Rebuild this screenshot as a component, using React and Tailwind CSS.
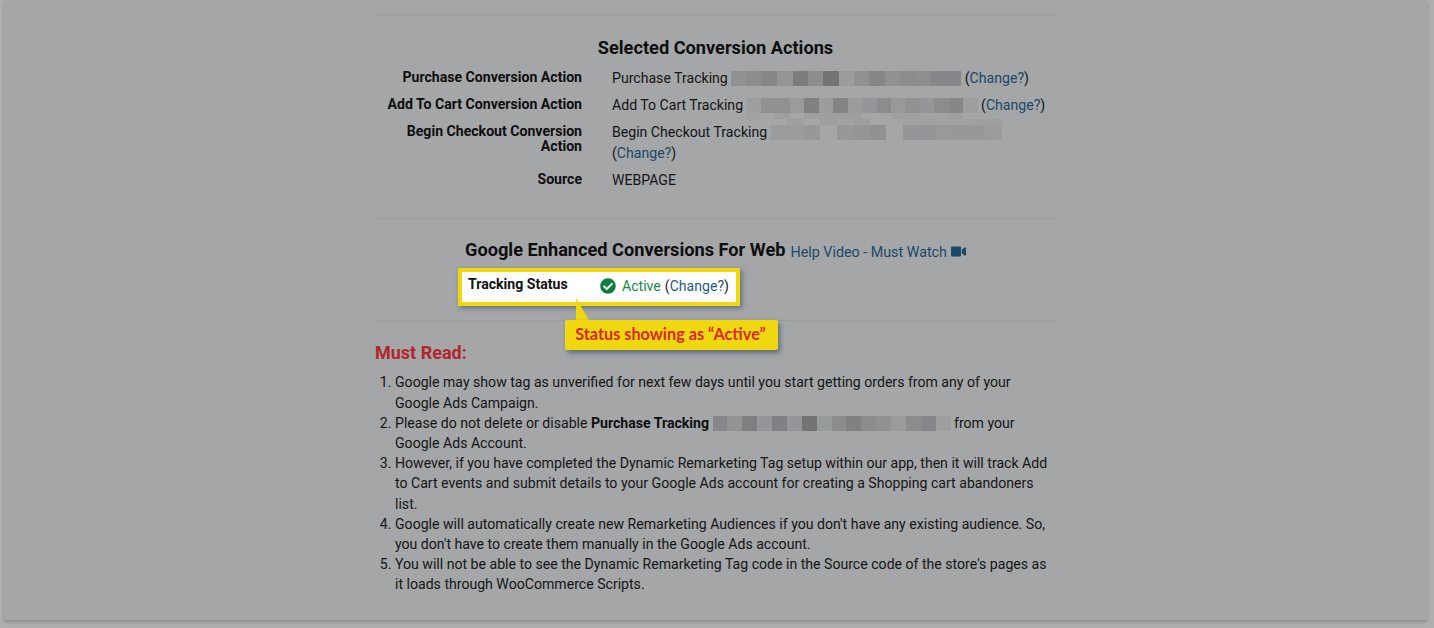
import { FaCheckCircle, FaVideo } from 'react-icons/fa';

const purchaseCells = ['#8f9193', '#8a8c8e', '#85878a', '#939597', '#7a7c7e', '#8b8d8f', '#727476', '#9a9c9e', '#8f9193', '#84868a', '#8f9193', '#8a8c8e', '#8c8e90', '#85878a', '#85878a'];
const addCells = ['#9c9ea0', '#8f9193', '#8f9193', '#999b9d', '#7f8183', '#9a9c9e', '#828486', '#9a9c9e', '#94969a', '#8a8c8e', '#97999b', '#8f9193', '#94969a', '#8a8c8e', '#85878a', '#9c9ea0'];
const addFringe = ['#a0a2a4', '#a4a6a8', '#9c9ea0', '#a4a6a8', '#9f9fa2', '#9f9fa2', '#9f9fa2', '#9c9ea0', '#a4a6a8', '#a4a6a8', '#9f9fa2', '#9f9fa2', '#a0a2a4', '#a0a2a4', '#9f9fa2', '#a4a6a8'];
const checkoutCells = ['#9a9c9e', '#9a9c9e', '#96989a', '#a4a6a8', '#969899', '#939597', '#8f9193', '#a4a6a8', '#94969a', '#94969a', '#979a9b', '#96989a', '#96989a', '#9a9c9e'];
const checkoutFringe = ['#a4a6a8', '#9f9fa2', '#a4a6a8', '#9f9fa2', '#a0a2a4', '#9c9ea0', '#a4a6a8', '#a4a6a8', '#a0a2a4', '#9f9fa2', '#a0a2a4', '#a0a2a4', '#9f9fa2', '#9f9fa2'];
const noteCells = ['#85878a', '#919395', '#7d7f81', '#94969a', '#7f8183', '#94969a', '#727476', '#979a9b', '#8a8c8e', '#7f8183', '#8a8c8e', '#8f9193', '#999b9d', '#8a8c8e', '#85878a', '#9c9ea0'];

function Cells({ cells, className }) {
  return (
    <span className={`flex ${className}`}>
      {cells.map((c, i) => (
        <span key={i} className="h-full flex-1" style={{ backgroundColor: c }} />
      ))}
    </span>
  );
}

function Blur({ cells, width, fringe, fringeClass }) {
  return (
    <span className={`relative inline-block h-[15px] align-[-3px] ${width}`}>
      <Cells cells={cells} className="h-full w-full" />
      {fringe && <Cells cells={fringe} className={`absolute left-0 w-full ${fringeClass}`} />}
    </span>
  );
}

function Change() {
  return (
    <>
      (<a className="text-[#1a4868]">Change?</a>)
    </>
  );
}

function Row({ label, children, className }) {
  return (
    <div className={`flex ${className}`}>
      <div className="w-[207px] shrink-0 pt-[2px] text-right font-bold leading-[15px] text-[#0e0e0e]">{label}</div>
      <div className="ml-[30px] w-[444px] leading-[21px] text-[#151515]">{children}</div>
    </div>
  );
}

export default function App() {
  return (
    <div className="h-[628px] overflow-hidden bg-[#adafb1] font-['Roboto',sans-serif] text-[14.1px] text-[#151515]">
      <div className="ml-[4px] h-[620px] w-[1423px] bg-[#a4a6a8] shadow-[0_2px_3px_#8b8d8f]">
        <div className="relative mx-auto w-[681px] pt-[15px]">
          <div className="h-px bg-[#9c9ea0]" />

          <h2 className="mt-[22px] text-center text-[18.2px] font-bold leading-[20px] text-[#0e0e0e]">Selected Conversion Actions</h2>

          <Row label="Purchase Conversion Action" className="mt-[10px]">
            Purchase Tracking <Blur cells={purchaseCells} width="w-[230px]" /> <Change />
          </Row>
          <Row label="Add To Cart Conversion Action" className="mt-[6px]">
            Add To Cart Tracking <Blur cells={addCells} width="w-[231px]" fringe={addFringe} fringeClass="top-full h-[8px]" /> <Change />
          </Row>
          <Row label={<>Begin Checkout Conversion<br />Action</>} className="mt-[6px]">
            Begin Checkout Tracking <Blur cells={checkoutCells} width="w-[231px]" fringe={checkoutFringe} fringeClass="bottom-full h-[6px]" /> <Change />
          </Row>
          <Row label="Source" className="mt-[6px]">WEBPAGE</Row>

          <div className="mt-[27px] h-px bg-[#9c9ea0]" />

          <div className="mt-[21px] flex items-baseline justify-center">
            <h2 className="text-[18.2px] font-bold leading-[20px] text-[#0e0e0e]">Google Enhanced Conversions For Web</h2>
            <a className="relative top-[1px] ml-[5px] text-[14.3px] text-[#1a4868]">Help Video - Must Watch</a>
            <FaVideo className="ml-[4px] self-center text-[15px] text-[#1a4868]" />
          </div>

          <div className="relative z-10 ml-[83px] mt-[6px] flex h-[38px] w-[282px] border-[4px] border-[#efd80f] bg-white pl-[6px] shadow-[2px_2px_5px_#5f6b7a]">
            <span className="w-[132px] pt-[4px] font-bold leading-[16px] text-[#111]">Tracking Status</span>
            <span className="flex items-center pb-[2px] text-[#222]">
              <FaCheckCircle className="mr-[6px] text-[16px] text-[#0d7f3e]" />
              <span className="text-[#178a43]">Active</span>
              <span className="ml-[4px]">(<a className="text-[#1f5a85]">Change?</a>)</span>
            </span>
          </div>

          <div className="mt-[14px] h-px bg-[#9c9ea0]" />

          <svg className="absolute left-[190px] top-[298px] z-20" width="40" height="30" viewBox="0 0 40 30">
            <path d="M11 0 L11 24 L25 24 Z" fill="#efd80f" />
          </svg>
          <div className="absolute left-[190px] top-[320px] z-20 flex h-[30px] w-[213px] items-center justify-center rounded-[2px] bg-[#efd80f] pb-[2px] pr-[2px] font-['Lato',sans-serif] text-[16.3px] font-bold text-[#e0262c] shadow-[2px_3px_5px_#5f6b7a]">
            Status showing as “Active”
          </div>

          <h3 className="mt-[21px] text-[18px] font-bold leading-[21px] text-[#b2262b]">Must Read:</h3>

          <ol className="ml-[20px] mt-[9px] list-decimal leading-[20.2px]">
            <li>Google may show tag as unverified for next few days until you start getting orders from any of your Google Ads Campaign.</li>
            <li>
              Please do not delete or disable <b className="font-bold text-[#0e0e0e]">Purchase Tracking</b>{' '}
              <Blur cells={noteCells} width="w-[238px]" /> from your Google Ads Account.
            </li>
            <li>However, if you have completed the Dynamic Remarketing Tag setup within our app, then it will track Add to Cart events and submit details to your Google Ads account for creating a Shopping cart abandoners list.</li>
            <li>Google will automatically create new Remarketing Audiences if you don't have any existing audience. So, you don't have to create them manually in the Google Ads account.</li>
            <li>You will not be able to see the Dynamic Remarketing Tag code in the Source code of the store's pages as it loads through WooCommerce Scripts.</li>
          </ol>
        </div>
      </div>
    </div>
  );
}
